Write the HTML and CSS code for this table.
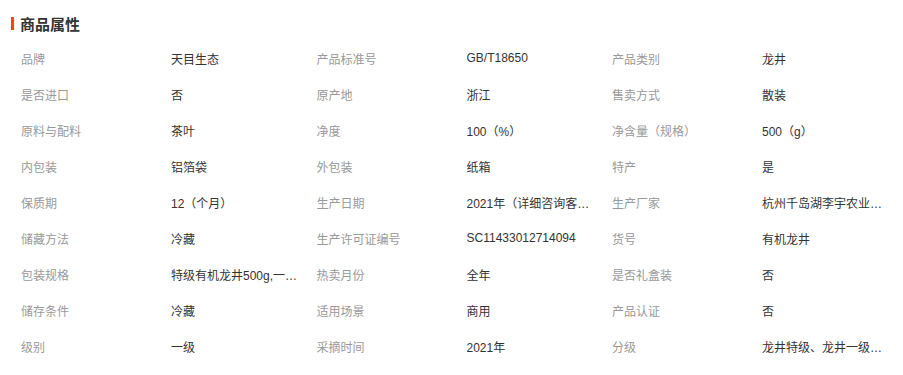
FILE: index.html
```html
<!DOCTYPE html>
<html lang="zh-CN">
<head>
<meta charset="utf-8">
<title>商品属性</title>
<link rel="stylesheet" href="styles.css">
</head>
<body>
<section class="attrs">
  <h2 class="attrs-title"><span class="attrs-mark"></span>商品属性</h2>
  <ul class="attrs-grid">
    <li class="attr"><span class="attr-name">品牌</span><span class="attr-value">天目生态</span></li>
    <li class="attr"><span class="attr-name">产品标准号</span><span class="attr-value">GB/T18650</span></li>
    <li class="attr"><span class="attr-name">产品类别</span><span class="attr-value">龙井</span></li>
    <li class="attr"><span class="attr-name">是否进口</span><span class="attr-value">否</span></li>
    <li class="attr"><span class="attr-name">原产地</span><span class="attr-value">浙江</span></li>
    <li class="attr"><span class="attr-name">售卖方式</span><span class="attr-value">散装</span></li>
    <li class="attr"><span class="attr-name">原料与配料</span><span class="attr-value">茶叶</span></li>
    <li class="attr"><span class="attr-name">净度</span><span class="attr-value">100（%）</span></li>
    <li class="attr"><span class="attr-name">净含量（规格）</span><span class="attr-value">500（g）</span></li>
    <li class="attr"><span class="attr-name">内包装</span><span class="attr-value">铝箔袋</span></li>
    <li class="attr"><span class="attr-name">外包装</span><span class="attr-value">纸箱</span></li>
    <li class="attr"><span class="attr-name">特产</span><span class="attr-value">是</span></li>
    <li class="attr"><span class="attr-name">保质期</span><span class="attr-value">12（个月）</span></li>
    <li class="attr"><span class="attr-name">生产日期</span><span class="attr-value">2021年（详细咨询客服）</span></li>
    <li class="attr"><span class="attr-name">生产厂家</span><span class="attr-value">杭州千岛湖李宇农业开发有限公司</span></li>
    <li class="attr"><span class="attr-name">储藏方法</span><span class="attr-value">冷藏</span></li>
    <li class="attr"><span class="attr-name">生产许可证编号</span><span class="attr-value">SC11433012714094</span></li>
    <li class="attr"><span class="attr-name">货号</span><span class="attr-value">有机龙井</span></li>
    <li class="attr"><span class="attr-name">包装规格</span><span class="attr-value">特级有机龙井500g,一级有机龙井500g</span></li>
    <li class="attr"><span class="attr-name">热卖月份</span><span class="attr-value">全年</span></li>
    <li class="attr"><span class="attr-name">是否礼盒装</span><span class="attr-value">否</span></li>
    <li class="attr"><span class="attr-name">储存条件</span><span class="attr-value">冷藏</span></li>
    <li class="attr"><span class="attr-name">适用场景</span><span class="attr-value">商用</span></li>
    <li class="attr"><span class="attr-name">产品认证</span><span class="attr-value">否</span></li>
    <li class="attr"><span class="attr-name">级别</span><span class="attr-value">一级</span></li>
    <li class="attr"><span class="attr-name">采摘时间</span><span class="attr-value">2021年</span></li>
    <li class="attr"><span class="attr-name">分级</span><span class="attr-value">龙井特级、龙井一级、龙井二级</span></li>
  </ul>
</section>
</body>
</html>
```

FILE: styles.css
```css
html, body {
  margin: 0;
  padding: 0;
  background: #fff;
}

body {
  font-family: "Liberation Sans", "Noto Sans CJK SC", sans-serif;
  font-size: 12px;
  color: #333;
}

.attrs {
  padding: 8px 0 0 11px;
}

.attrs-title {
  display: flex;
  align-items: center;
  height: 30px;
  margin: 0;
  font-size: 15px;
  font-weight: 700;
  color: #333;
}

.attrs-mark {
  display: block;
  width: 3px;
  height: 13px;
  margin-right: 6px;
  background: #ff4400;
}

.attrs-grid {
  list-style: none;
  margin: 2px 0 0 10px;
  padding: 0;
  display: grid;
  grid-template-columns: 295.5px 295.5px 290px;
  grid-auto-rows: 36px;
}

.attr {
  display: flex;
  align-items: center;
  min-width: 0;
}

.attr-name {
  flex: 0 0 150px;
  color: #999;
  white-space: nowrap;
}

.attr-value {
  width: 127px;
  color: #333;
  white-space: nowrap;
  overflow: hidden;
  text-overflow: ellipsis;
}
```
